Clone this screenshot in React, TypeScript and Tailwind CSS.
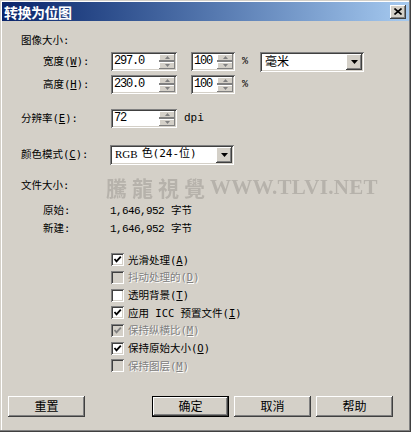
import React from "react";

const SUNKEN =
  "shadow-[inset_1px_1px_0_#808080,inset_-1px_-1px_0_#ffffff,inset_2px_2px_0_#404040,inset_-2px_-2px_0_#d4d0c8]";
const RAISED =
  "shadow-[inset_-1px_-1px_0_#404040,inset_1px_1px_0_#ffffff,inset_-2px_-2px_0_#808080,inset_2px_2px_0_#d4d0c8]";
const RAISED_SM = "shadow-[inset_-1px_-1px_0_#808080,inset_1px_1px_0_#ffffff]";
const CJK = "font-[family-name:'DejaVu_Sans_Mono','Noto_Sans_CJK_SC',monospace]";
const MONO = "font-[family-name:'Liberation_Mono','Noto_Sans_CJK_SC',monospace]";

function Key({ k }: { k: string }) {
  return (
    <>
      (<span className="underline underline-offset-1">{k}</span>)
    </>
  );
}

function Arrow({ up }: { up: boolean }) {
  return (
    <svg width="5" height="3" viewBox="0 0 5 3" className="block">
      <path d={up ? "M2.5 0 L5 3 L0 3Z" : "M0 0 L5 0 L2.5 3Z"} fill="#808080" />
    </svg>
  );
}

function Spin({ value, w }: { value: string; w: string }) {
  return (
    <div className={`flex h-[19px] ${w} bg-white p-[2px] ${SUNKEN}`}>
      <div className={`flex-1 pl-[1px] text-[12px] leading-[15px] tracking-[-1.2px] text-black ${MONO}`}>{value}</div>
      <div className="flex w-[16px] flex-col">
        <div className={`flex flex-1 items-center justify-center bg-[#d4d0c8] ${RAISED_SM}`}>
          <Arrow up />
        </div>
        <div className="h-[1px] bg-[#808080]" />
        <div className={`flex flex-1 items-center justify-center bg-[#d4d0c8] ${RAISED_SM}`}>
          <Arrow up={false} />
        </div>
      </div>
    </div>
  );
}

function Select({ children, w }: { children: React.ReactNode; w: string }) {
  return (
    <div className={`flex h-[20px] ${w} bg-white p-[2px] ${SUNKEN}`}>
      <div className="flex flex-1 items-center pl-[3px] text-black">{children}</div>
      <div className={`flex w-[16px] items-center justify-center bg-[#d4d0c8] ${RAISED}`}>
        <svg width="7" height="4" viewBox="0 0 7 4">
          <path d="M0 0 L7 0 L3.5 4Z" fill="#000" />
        </svg>
      </div>
    </div>
  );
}

function Check({ label, checked, disabled }: { label: React.ReactNode; checked?: boolean; disabled?: boolean }) {
  return (
    <div className="flex h-[17.7px] items-center">
      <div
        className={`flex h-[13px] w-[13px] items-center justify-center ${disabled ? "bg-[#d4d0c8]" : "bg-white"} ${SUNKEN}`}
      >
        {checked && (
          <svg width="9" height="9" viewBox="0 0 9 9">
            <path d="M1.5 4 L3.5 6.3 L7.8 1.6" fill="none" stroke={disabled ? "#808080" : "#000"} strokeWidth="1.8" />
          </svg>
        )}
      </div>
      <div
        className={`ml-[4px] whitespace-pre text-[10.5px] leading-none ${
          disabled ? "text-[#808080] [text-shadow:1px_1px_0_#ffffff]" : "text-black"
        }`}
      >
        {label}
      </div>
    </div>
  );
}

function Btn({ children, def, ml }: { children: React.ReactNode; def?: boolean; ml?: string }) {
  return (
    <div className={`${ml ?? ""} ${def ? "border border-black" : ""} h-[21px] w-[77px]`}>
      <div
        className={`flex h-full w-full items-center justify-center bg-[#d4d0c8] text-[12px] text-black font-[family-name:'Noto_Sans_CJK_SC',sans-serif] ${RAISED}`}
      >
        {children}
      </div>
    </div>
  );
}

export default function App() {
  return (
    <div
      className={`relative h-[432px] w-[411px] overflow-hidden bg-[#d4d0c8] ${CJK} shadow-[inset_-1px_-1px_0_#404040,inset_-2px_-2px_0_#808080,inset_1px_1px_0_#d4d0c8,inset_2px_2px_0_#ffffff]`}
    >
      {/* title bar */}
      <div className="mx-[2px] mt-[2px] flex h-[19px] items-center bg-gradient-to-r from-[#0a246a] to-[#a6caf0] pl-[2px] pr-[3px]">
        <div className="text-[14px] font-bold leading-none tracking-[-0.5px] text-white font-[family-name:'Noto_Sans_CJK_SC',sans-serif]">
          转换为位图
        </div>
        <div className={`ml-auto flex h-[14px] w-[16px] items-center justify-center bg-[#d4d0c8] ${RAISED}`}>
          <svg width="8" height="7" viewBox="0 0 8 7">
            <path d="M0.5 0.5 L7.5 6.5 M7.5 0.5 L0.5 6.5" stroke="#000" strokeWidth="1.6" />
          </svg>
        </div>
      </div>

      <div className="flex flex-col text-[10.5px] text-black">
        <div className="ml-[21px] mt-[11px] h-[16px] leading-[16px]">图像大小:</div>

        <div className="mt-[4px] flex h-[19px] items-center">
          <div className="ml-[43px] w-[68px]">
            宽度<Key k="W" />:
          </div>
          <Spin value="297.0" w="w-[66px]" />
          <div className="ml-[14px]">
            <Spin value="100" w="w-[44px]" />
          </div>
          <div className={`ml-[7px] text-[10px] ${MONO}`}>%</div>
          <div className="ml-[12px]">
            <Select w="w-[104px]">
              <span className="text-[12px]">毫米</span>
            </Select>
          </div>
        </div>

        <div className="mt-[4px] flex h-[19px] items-center">
          <div className="ml-[43px] w-[68px]">
            高度<Key k="H" />:
          </div>
          <Spin value="230.0" w="w-[66px]" />
          <div className="ml-[14px]">
            <Spin value="100" w="w-[44px]" />
          </div>
          <div className={`ml-[7px] text-[10px] ${MONO}`}>%</div>
        </div>

        <div className="mt-[15px] flex h-[19px] items-center">
          <div className="ml-[21px] w-[90px]">
            分辨率<Key k="E" />:
          </div>
          <Spin value="72" w="w-[66px]" />
          <div className={`ml-[7px] text-[11px] ${MONO}`}>dpi</div>
        </div>

        <div className="mt-[17px] flex h-[19px] items-center">
          <div className="ml-[21px] w-[89px]">
            颜色模式<Key k="C" />:
          </div>
          <Select w="w-[124px]">
            <span className="text-[11px] font-[family-name:'Liberation_Serif',serif]">RGB</span>
            <span className="ml-[4px] text-[11px]">色(24-位)</span>
          </Select>
        </div>

        <div className="ml-[21px] mt-[13px] h-[16px] leading-[16px]">文件大小:</div>
        <div className="mt-[10px] flex h-[16px] items-center">
          <div className="ml-[43px] w-[67px]">原始:</div>
          <div className={`text-[11px] tracking-[-0.6px] ${MONO}`}>1,646,952</div>
          <div className="ml-[7px]">字节</div>
        </div>
        <div className="mt-[2px] flex h-[16px] items-center">
          <div className="ml-[43px] w-[67px]">新建:</div>
          <div className={`text-[11px] tracking-[-0.6px] ${MONO}`}>1,646,952</div>
          <div className="ml-[7px]">字节</div>
        </div>

        <div className="ml-[111px] mt-[14px] flex flex-col">
          <Check checked label={<>光滑处理<Key k="A" /></>} />
          <Check disabled label={<>抖动处理的<Key k="D" /></>} />
          <Check label={<>透明背景<Key k="T" /></>} />
          <Check checked label={<>应用 ICC 预置文件<Key k="I" /></>} />
          <Check checked disabled label={<>保持纵横比<Key k="M" /></>} />
          <Check checked label={<>保持原始大小<Key k="O" /></>} />
          <Check disabled label={<>保持图层<Key k="M" /></>} />
        </div>

        <div className="mt-[21px] flex pl-[8px]">
          <Btn>重置</Btn>
          <Btn def ml="ml-[67px]">确定</Btn>
          <Btn ml="ml-[5px]">取消</Btn>
          <Btn ml="ml-[5px]">帮助</Btn>
        </div>
      </div>

      {/* watermark */}
      <div className="pointer-events-none absolute left-[106px] top-[172px] flex items-center whitespace-nowrap text-[#b3afa8] opacity-90">
        <span className="text-[21px] font-bold tracking-[5px] font-[family-name:'Noto_Sans_CJK_TC',serif]">騰龍視覺</span>
        <span className="text-[21px] font-bold tracking-[0.3px] font-[family-name:'Liberation_Serif',serif]">WWW.TLVI.NET</span>
      </div>
    </div>
  );
}
